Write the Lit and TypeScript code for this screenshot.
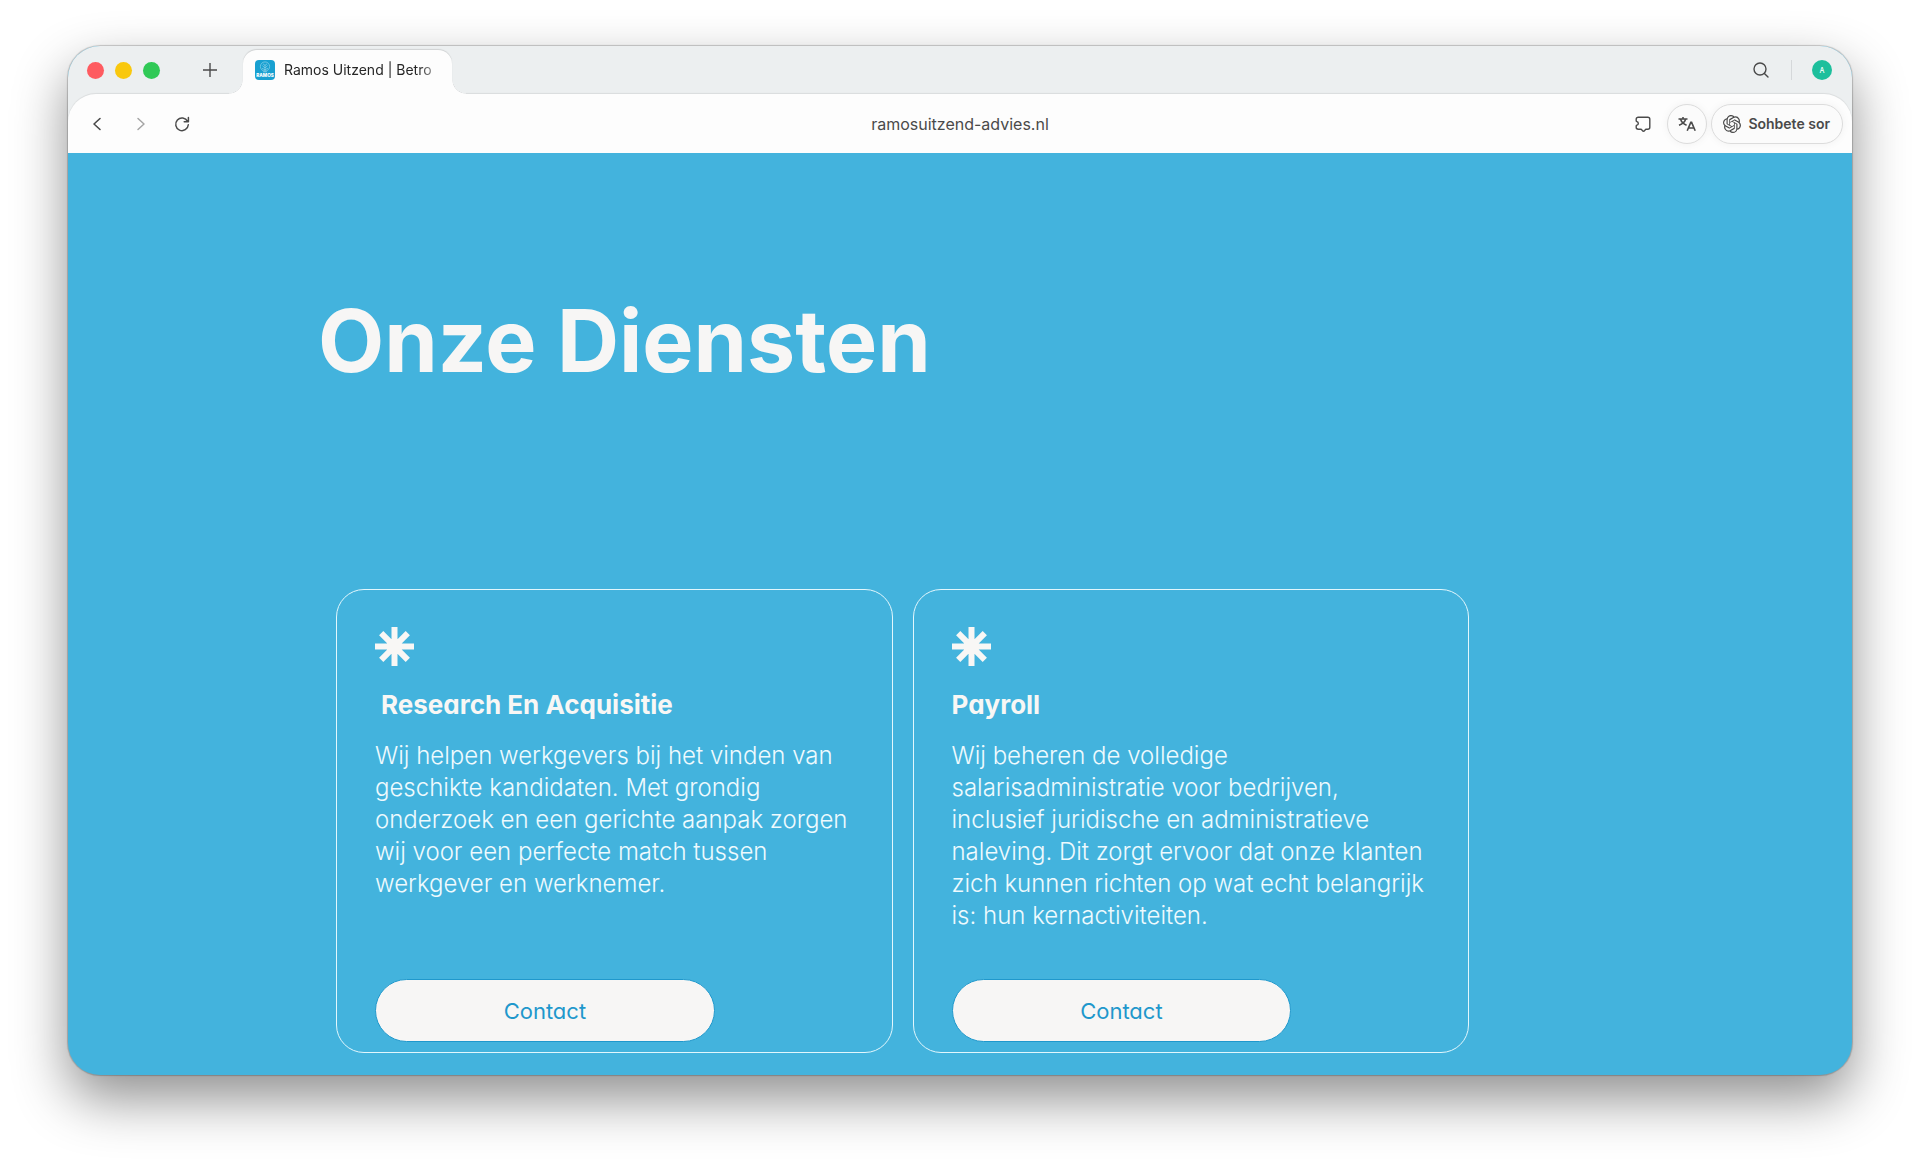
import { LitElement, html, css } from "lit";
import { customElement, property } from "lit/decorators.js";

interface Service {
  title: string;
  text: string;
  indent?: boolean;
}

const SERVICES: Service[] = [
  {
    title: "Research En Acquisitie",
    text: "Wij helpen werkgevers bij het vinden van geschikte kandidaten. Met grondig onderzoek en een gerichte aanpak zorgen wij voor een perfecte match tussen werkgever en werknemer.",
    indent: true,
  },
  {
    title: "Payroll",
    text: "Wij beheren de volledige salarisadministratie voor bedrijven, inclusief juridische en administratieve naleving. Dit zorgt ervoor dat onze klanten zich kunnen richten op wat echt belangrijk is: hun kernactiviteiten.",
  },
];

@customElement("browser-tabs")
export class BrowserTabs extends LitElement {
  static styles = css`
    :host { display: block; }
    .strip {
      display: flex;
      align-items: stretch;
      height: 48px;
      padding: 0 20px 0 19px;
      background: #eceff0;
      font-family: Inter, "Liberation Sans", sans-serif;
    }
    button { border: 0; padding: 0; background: none; display: grid; place-items: center; color: #4a4a4a; }
    .lights { display: flex; align-items: center; gap: 11px; }
    .light { width: 17px; height: 17px; border-radius: 50%; }
    .red { background: #fe5b60; }
    .yellow { background: #f9c80e; }
    .green { background: #30c956; }
    .new { width: 30px; margin-left: 35px; }
    .tab {
      position: relative;
      display: flex;
      align-items: center;
      gap: 9px;
      box-sizing: border-box;
      width: 209px;
      margin: 4px 0 0 18px;
      padding: 0 16px 4px 12px;
      border-radius: 14px 14px 0 0;
      background: #fdfdfd;
      box-shadow: 0 -1px 1px #0000001f;
    }
    .favicon { flex: none; }
    .flare { position: absolute; bottom: 0; width: 14px; height: 14px; }
    .flare.left { left: -14px; background: radial-gradient(circle at 0 0, #eceff0 13px, #d6d8da 13px, #fdfdfd 14px); }
    .flare.right { right: -14px; background: radial-gradient(circle at 100% 0, #eceff0 13px, #d6d8da 13px, #fdfdfd 14px); }
    .name {
      flex: 1;
      white-space: nowrap;
      font-size: 14px;
      line-height: 20px;
      color: #262626;
      -webkit-mask-image: linear-gradient(90deg, #000 88%, #0006 100%);
      mask-image: linear-gradient(90deg, #000 88%, #0006 100%);
    }
    .end { margin-left: auto; display: flex; align-items: center; }
    .rule { width: 1px; height: 20px; margin: 0 20px 0 22px; background: #d5d8da; }
    .avatar { width: 20px; height: 20px; border-radius: 50%; background: #1dbf9c; color: #fff; font: 500 7px Inter, sans-serif; }
  `;
  render() {
    return html`
      <div class="strip">
        <div class="lights">
          <button class="light red" aria-label="Sluiten"></button>
          <button class="light yellow" aria-label="Minimaliseren"></button>
          <button class="light green" aria-label="Maximaliseren"></button>
        </div>
        <button class="new" aria-label="Nieuw tabblad">
          <svg width="16" height="16" viewBox="0 0 16 16" fill="none" stroke="currentColor" stroke-width="1.4"><path d="M8 1v14M1 8h14" /></svg>
        </button>
        <div class="tab">
          <span class="flare left"></span>
          <svg class="favicon" width="20" height="20" viewBox="0 0 20 20" fill="none">
            <rect width="20" height="20" rx="4" fill="#18a0d1" />
            <g stroke="#8fd3ea" stroke-width=".7">
              <circle cx="10" cy="6.5" r="4.6" />
              <path d="M10 11.5V5M10 8 7.4 5.6M10 8l2.6-2.4M7 8.2l3 1.6 3-1.6M8 3.8l2 1.6 2-1.6M8 11.8h4" />
            </g>
            <text x="10" y="17.4" text-anchor="middle" font-family="Inter, sans-serif" font-weight="800" font-size="4.6" fill="#fff">RAMOS</text>
          </svg>
          <span class="name">Ramos Uitzend | Betro</span>
          <span class="flare right"></span>
        </div>
        <div class="end">
          <button aria-label="Zoeken">
            <svg width="16" height="16" viewBox="0 0 16 16" fill="none" stroke="currentColor" stroke-width="1.4" stroke-linecap="round"><circle cx="7" cy="7" r="6" /><path d="m11.4 11.4 3.6 3.6" /></svg>
          </button>
          <span class="rule"></span>
          <button class="avatar" aria-label="Profiel">A</button>
        </div>
      </div>
    `;
  }
}

@customElement("browser-toolbar")
export class BrowserToolbar extends LitElement {
  static styles = css`
    :host { display: block; background: #eceff0; }
    .bar {
      display: grid;
      grid-template-columns: 1fr auto 1fr;
      align-items: center;
      height: 59px;
      padding: 0 9px;
      border-radius: 28px 28px 0 0;
      background: #fdfdfd;
      box-shadow: 0 -1px 1px #00000014;
      font-family: Inter, "Liberation Sans", sans-serif;
      color: #4a4a4a;
    }
    button { border: 0; padding: 0; background: none; color: inherit; display: flex; align-items: center; justify-content: center; font-family: inherit; }
    .nav { display: flex; gap: 22px; margin-left: 11px; }
    .nav button { width: 20px; height: 20px; }
    .nav .off { color: #a5a5a5; }
    .address { font-size: 16px; line-height: 20px; }
    .tools { display: flex; justify-content: flex-end; align-items: center; gap: 4px; }
    .ext { margin-right: 10px; }
    .round, .ask { height: 40px; border: 1px solid #dcdcdc; border-radius: 20px; background: #fbfbfb; box-shadow: 0 0 8px #0000000d; }
    .round { width: 40px; }
    .ask { padding: 0 12px 0 11px; gap: 7px; font-size: 14px; font-weight: 600; }
  `;
  render() {
    return html`
      <div class="bar">
        <div class="nav">
          <button aria-label="Terug"><svg width="20" height="20" viewBox="0 0 20 20" fill="none" stroke="currentColor" stroke-width="1.6" stroke-linecap="round" stroke-linejoin="round"><path d="m12 4.500-6 5.500 6 5.500" /></svg></button>
          <button class="off" aria-label="Vooruit"><svg width="20" height="20" viewBox="0 0 20 20" fill="none" stroke="currentColor" stroke-width="1.5" stroke-linecap="round" stroke-linejoin="round"><path d="m8 4.500 6 5.500-6 5.500" /></svg></button>
          <button aria-label="Vernieuwen"><svg width="20" height="20" viewBox="0 0 20 20" fill="none" stroke="currentColor" stroke-width="1.5" stroke-linecap="round" stroke-linejoin="round"><path d="M15.600 7.400A6.300 6.300 0 1 0 16.300 10.800M16.400 3.600v4.200h-4.200" /></svg></button>
        </div>
        <span class="address">ramosuitzend-advies.nl</span>
        <div class="tools">
          <button class="ext" aria-label="Extensies">
            <svg width="20" height="20" viewBox="0 0 20 20" fill="none" stroke="currentColor" stroke-width="1.4" stroke-linejoin="round"><path d="M5.200 3.200h9.600a2 2 0 0 1 2 2v8a2 2 0 0 1-2 2h-1.400q-1 0-1.300.9-.5 1.200-1.600 1.200t-1.600-1.200q-.3-.9-1.300-.9H5.200a2 2 0 0 1-2-2v-1.300q0-.6.700-.8 1.400-.4 1.400-1.700T3.900 7.700q-.7-.2-.7-.9V5.200a2 2 0 0 1 2-2Z" /></svg>
          </button>
          <button class="round" aria-label="Vertalen">
            <svg width="20" height="20" viewBox="0 0 20 20" fill="none" stroke="currentColor" stroke-width="1.6"><path d="M1.500 5h9M6 3v2M3.600 5.200q1.200 4 6 6M8.600 5.200q-1.200 4-6.600 6M10.200 16.800l3.600-8.400h.8l3.600 8.400M11.400 14h5.600" /></svg>
          </button>
          <button class="ask">
            <svg width="18" height="18" viewBox="0 0 24 24" fill="currentColor">
              <path d="M22.2819 9.8211a5.9847 5.9847 0 0 0-.5157-4.9108 6.0462 6.0462 0 0 0-6.5098-2.9A6.0651 6.0651 0 0 0 4.9807 4.1818a5.9847 5.9847 0 0 0-3.9977 2.9 6.0462 6.0462 0 0 0 .7427 7.0966 5.98 5.98 0 0 0 .511 4.9107 6.051 6.051 0 0 0 6.5146 2.9001A5.9847 5.9847 0 0 0 13.2599 24a6.0557 6.0557 0 0 0 5.7718-4.2058 5.9894 5.9894 0 0 0 3.9977-2.9001 6.0557 6.0557 0 0 0-.7475-7.0729zm-9.022 12.6081a4.4755 4.4755 0 0 1-2.8764-1.0408l.1419-.0804 4.7783-2.7582a.7948.7948 0 0 0 .3927-.6813v-6.7369l2.02 1.1686a.071.071 0 0 1 .038.052v5.5826a4.504 4.504 0 0 1-4.4945 4.4944zm-9.6607-4.1254a4.4708 4.4708 0 0 1-.5346-3.0137l.142.0852 4.783 2.7582a.7712.7712 0 0 0 .7806 0l5.8428-3.3685v2.3324a.0804.0804 0 0 1-.0332.0615L9.74 19.9502a4.4992 4.4992 0 0 1-6.1408-1.6464zM2.3408 7.8956a4.485 4.485 0 0 1 2.3655-1.9728V11.6a.7664.7664 0 0 0 .3879.6765l5.8144 3.3543-2.0201 1.1685a.0757.0757 0 0 1-.071 0l-4.8303-2.7865A4.504 4.504 0 0 1 2.3408 7.872zm16.5963 3.8558L13.1038 8.364 15.1192 7.2a.0757.0757 0 0 1 .071 0l4.8303 2.7913a4.4944 4.4944 0 0 1-.6765 8.1042v-5.6772a.79.79 0 0 0-.407-.667zm2.0107-3.0231l-.142-.0852-4.7735-2.7818a.7759.7759 0 0 0-.7854 0L9.409 9.2297V6.8974a.0662.0662 0 0 1 .0284-.0615l4.8303-2.7866a4.4992 4.4992 0 0 1 6.6802 4.66zM8.3065 12.863l-2.02-1.1638a.0804.0804 0 0 1-.038-.0567V6.0742a4.4992 4.4992 0 0 1 7.3757-3.4537l-.142.0805L8.704 5.459a.7948.7948 0 0 0-.3927.6813zm1.0976-2.3654l2.602-1.4998 2.6069 1.4998v2.9994l-2.5974 1.4997-2.6067-1.4997Z" />
            </svg>
            Sohbete sor
          </button>
        </div>
      </div>
    `;
  }
}

@customElement("service-card")
export class ServiceCard extends LitElement {
  @property({ attribute: false }) service!: Service;
  static styles = css`
    :host { display: flex; }
    .card {
      flex: 1;
      display: flex;
      flex-direction: column;
      box-sizing: border-box;
      padding: 37px 38px 10px;
      border: 1px solid #e2f7fd;
      border-radius: 28px;
      color: #f8f7f5;
    }
    .star { display: block; }
    h2 { margin: 21px 0 0; font: 700 26px/36px Inter, sans-serif; font-feature-settings: "cv11"; }
    .indent { padding-left: 6px; }
    p { margin: 17px 0 47px; font: 300 24px/32px Inter, sans-serif; color: #eefafe; }
    a {
      display: flex;
      align-items: center;
      justify-content: center;
      box-sizing: border-box;
      width: 71%;
      height: 63px;
      margin-top: auto;
      border: 1px solid #1f98cc;
      border-radius: 32px;
      background: #f7f6f5;
      color: #1f98cc;
      font: 400 22px/32px Inter, sans-serif;
      font-feature-settings: "cv11";
      text-decoration: none;
    }
  `;
  render() {
    const { title, text, indent } = this.service;
    return html`
      <article class="card">
        <svg class="star" width="39" height="39" viewBox="0 0 39 39" stroke="#f8f7f5" stroke-width="6" aria-hidden="true">
          <path d="M19.500 0v39M0 19.500h39M6.200 6.200l26.600 26.600M32.800 6.200 6.200 32.800" />
        </svg>
        <h2 class=${indent ? "indent" : ""}>${title}</h2>
        <p>${text}</p>
        <a href="#contact">Contact</a>
      </article>
    `;
  }
}

@customElement("app-root")
export class AppRoot extends LitElement {
  static styles = css`
    :host { display: block; min-height: 100vh; box-sizing: border-box; padding: 46px 68px 90px; background: #fff; }
    .window {
      overflow: hidden;
      border-radius: 32px;
      background: #43b3dd;
      box-shadow: 0 0 1px 1px #00000033, 0 24px 54px #00000070;
    }
    main { padding: 144px 383px 22px 250px; }
    h1 { margin: 0; font: 700 86px/88px Inter, sans-serif; color: #f7f6f5; white-space: nowrap; }
    .cards { display: grid; grid-template-columns: 1fr 1fr; gap: 20px; margin: 204px 0 0 18px; }
  `;
  render() {
    return html`
      <div class="window">
        <browser-tabs></browser-tabs>
        <browser-toolbar></browser-toolbar>
        <main>
          <h1>Onze Diensten</h1>
          <section class="cards">
            ${SERVICES.map((s) => html`<service-card .service=${s}></service-card>`)}
          </section>
        </main>
      </div>
    `;
  }
}
